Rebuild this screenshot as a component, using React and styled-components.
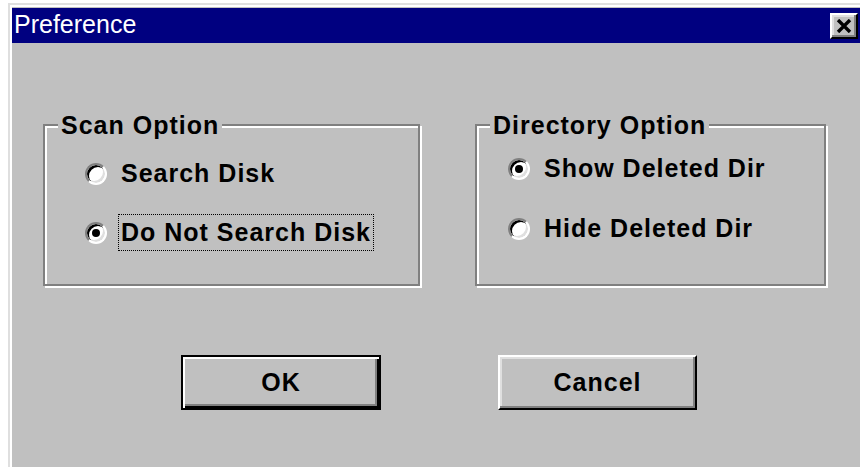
import React from "react";
import styled, { createGlobalStyle } from "styled-components";

const GlobalStyle = createGlobalStyle`
  html, body {
    margin: 0;
    padding: 0;
    background: #ffffff;
    overflow: hidden;
  }
  body {
    font-family: "Liberation Sans", Arial, sans-serif;
  }
`;

const Window = styled.div`
  box-sizing: border-box;
  margin: 3px 0 0 8px;
  width: 860px;
  height: 470px;
  background: #c0c0c0;
  border: 2px solid;
  border-color: #dfdfdf #000 #000 #dfdfdf;
  box-shadow: inset 2px 2px 0 #fff, inset -2px -2px 0 #808080;
  padding: 3px 4px 4px 2px;
  display: flex;
  flex-direction: column;
`;

const TitleBar = styled.div`
  height: 35px;
  flex: 0 0 35px;
  background: #000080;
  display: flex;
  align-items: center;
  justify-content: space-between;
  padding-left: 2px;
`;

const TitleText = styled.span`
  color: #fff;
  font-size: 25px;
  line-height: 1;
  padding-bottom: 3px;
`;

const CloseButton = styled.button`
  box-sizing: border-box;
  width: 28px;
  height: 26px;
  margin-right: 4px;
  padding: 0;
  background: #c0c0c0;
  border: 2px solid;
  border-color: #fff #000 #000 #fff;
  box-shadow: inset -2px -2px 0 #808080, inset 2px 2px 0 #dfdfdf;
  display: flex;
  align-items: center;
  justify-content: center;
`;

const Client = styled.div`
  flex: 1;
  display: flex;
  flex-direction: column;
`;

const GroupRow = styled.div`
  display: flex;
  align-items: flex-start;
  gap: 55px;
  margin-top: 69px;
  padding-left: 31px;
`;

const Group = styled.fieldset`
  box-sizing: border-box;
  margin: 0;
  padding: 0;
  width: ${(p) => p.$width}px;
  height: 174px;
  border: 2px solid #808080;
  box-shadow: 2px 2px 0 #fff, inset 2px 2px 0 #fff;
`;

const Caption = styled.legend`
  margin-left: 13px;
  padding: 0 3px;
  background: #c0c0c0;
  font-size: 25px;
  font-weight: bold;
  letter-spacing: 1px;
  line-height: 26px;
  color: #000;
`;

const Options = styled.div`
  display: flex;
  flex-direction: column;
  padding-left: ${(p) => p.$indent}px;
  padding-top: ${(p) => p.$top}px;
  gap: ${(p) => p.$gap}px;
`;

const OptionRow = styled.div`
  display: flex;
  align-items: center;
  height: 37px;
`;

const Radio = styled.span`
  box-sizing: border-box;
  position: relative;
  width: 22px;
  height: 22px;
  flex: 0 0 22px;
  border-radius: 50%;
  background: #fff;
  border: 2px solid;
  border-color: #808080 #fff #fff #808080;
  box-shadow: inset 2px 2px 0 #000, inset -2px -2px 0 #dfdfdf;

  &::after {
    content: "";
    display: ${(p) => (p.$checked ? "block" : "none")};
    position: absolute;
    left: 50%;
    top: 50%;
    width: 8px;
    height: 8px;
    margin: -4px 0 0 -4px;
    border-radius: 50%;
    background: #000;
  }
`;

const OptionLabel = styled.span`
  margin-left: 11px;
  padding: 2px;
  border: 1px dotted ${(p) => (p.$focused ? "#000" : "transparent")};
  font-size: 25px;
  font-weight: bold;
  letter-spacing: 1px;
  line-height: 31px;
  color: #000;
  white-space: nowrap;
`;

const ButtonRow = styled.div`
  display: flex;
  gap: 117px;
  margin-top: 69px;
  padding-left: 169px;
`;

const PushButton = styled.button`
  box-sizing: border-box;
  width: ${(p) => p.$width}px;
  height: 55px;
  padding: 0;
  background: #c0c0c0;
  font-family: "Liberation Sans", Arial, sans-serif;
  font-size: 25px;
  font-weight: bold;
  letter-spacing: 1px;
  color: #000;
  border: 2px solid;
  border-color: ${(p) => (p.$default ? "#000" : "#fff #000 #000 #fff")};
  box-shadow: ${(p) =>
    p.$default
      ? "inset 2px 2px 0 #fff, inset -2px -2px 0 #000, inset -4px -4px 0 #808080"
      : "inset -2px -2px 0 #808080, inset 2px 2px 0 #dfdfdf"};
`;

function CloseGlyph() {
  return (
    <svg width="16" height="14" viewBox="0 0 16 14">
      <path d="M2 1 L14 13 M14 1 L2 13" stroke="#000" strokeWidth="3.4" fill="none" />
    </svg>
  );
}

function Option({ label, checked, focused }) {
  return (
    <OptionRow>
      <Radio $checked={checked} />
      <OptionLabel $focused={focused}>{label}</OptionLabel>
    </OptionRow>
  );
}

export default function App() {
  return (
    <>
      <GlobalStyle />
      <Window>
        <TitleBar>
          <TitleText>Preference</TitleText>
          <CloseButton aria-label="Close">
            <CloseGlyph />
          </CloseButton>
        </TitleBar>
        <Client>
          <GroupRow>
            <Group $width={377}>
              <Caption>Scan Option</Caption>
              <Options $indent={40} $top={17} $gap={22}>
                <Option label="Search Disk" />
                <Option label="Do Not Search Disk" checked focused />
              </Options>
            </Group>
            <Group $width={351}>
              <Caption>Directory Option</Caption>
              <Options $indent={31} $top={12} $gap={23}>
                <Option label="Show Deleted Dir" checked />
                <Option label="Hide Deleted Dir" />
              </Options>
            </Group>
          </GroupRow>
          <ButtonRow>
            <PushButton $width={200} $default>OK</PushButton>
            <PushButton $width={199}>Cancel</PushButton>
          </ButtonRow>
        </Client>
      </Window>
    </>
  );
}
